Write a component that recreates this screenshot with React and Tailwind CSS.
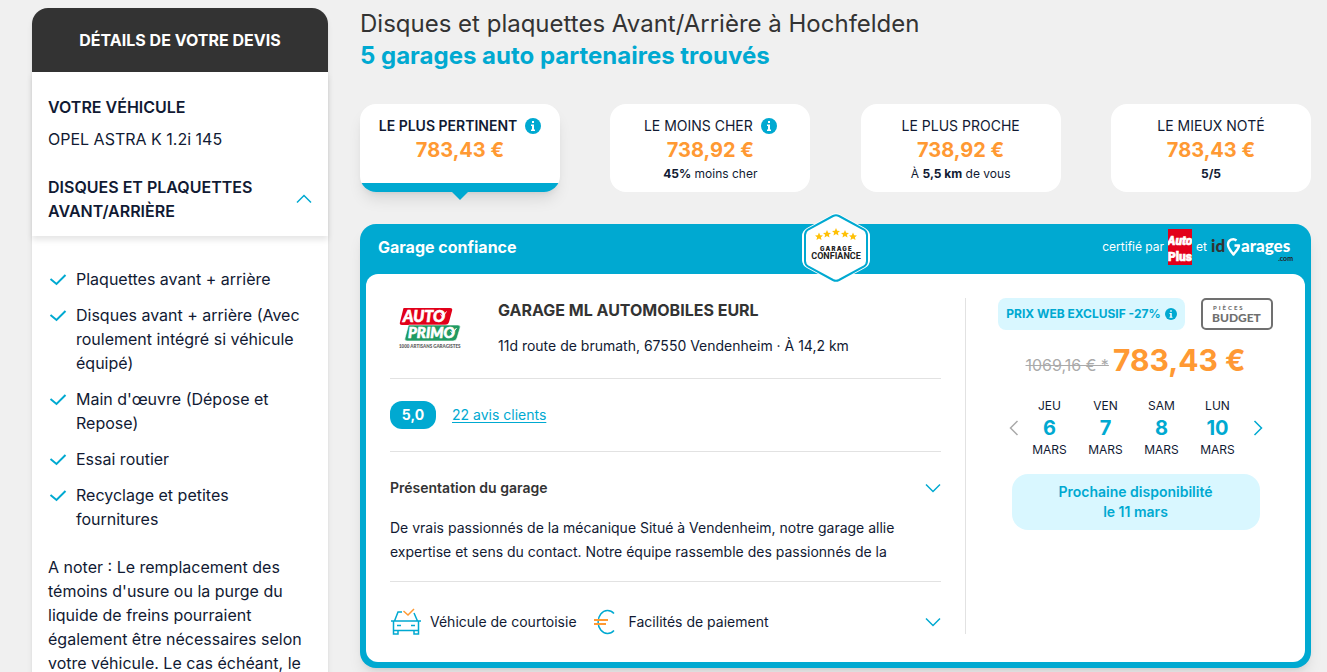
import React, { useState } from 'react';

const services = [
  'Plaquettes avant + arrière',
  'Disques avant + arrière (Avec roulement intégré si véhicule équipé)',
  "Main d'œuvre (Dépose et Repose)",
  'Essai routier',
  'Recyclage et petites fournitures',
];

const sorts = [
  { id: 'pertinent', label: 'LE PLUS PERTINENT', price: '783,43 €', info: true, note: null },
  { id: 'cher', label: 'LE MOINS CHER', price: '738,92 €', info: true, note: <><b>45%</b> moins cher</> },
  { id: 'proche', label: 'LE PLUS PROCHE', price: '738,92 €', info: false, note: <>À <b>5,5 km</b> de vous</> },
  { id: 'note', label: 'LE MIEUX NOTÉ', price: '783,43 €', info: false, note: <b>5/5</b> },
];

const days = [
  { day: 'JEU', num: 6, month: 'MARS' },
  { day: 'VEN', num: 7, month: 'MARS' },
  { day: 'SAM', num: 8, month: 'MARS' },
  { day: 'LUN', num: 10, month: 'MARS' },
];

const App = () => {
  const [sort, setSort] = useState('pertinent');

  return (
    <div className="flex h-screen items-start gap-8 overflow-hidden bg-[#f0f0f0] pt-2 pr-4 pl-8 font-['Inter',sans-serif] text-[#111a33]">
      <Sidebar />

      <main className="min-w-0 flex-1">
        <h1 className="text-2xl leading-8 text-[#333333]">Disques et plaquettes Avant/Arrière à Hochfelden</h1>
        <h2 className="text-2xl leading-8 font-bold text-[#00a9d1]">5 garages auto partenaires trouvés</h2>

        {/* Onglets de tri */}
        <div className="mt-8 flex justify-between gap-4">
          {sorts.map(item => (
            <SortCard key={item.id} item={item} active={item.id === sort} onClick={() => setSort(item.id)} />
          ))}
        </div>

        <GarageCard />
      </main>
    </div>
  );
};

const Sidebar = () => (
  <aside className="w-[296px] shrink-0 rounded-t-2xl bg-white shadow-md">
    <div className="flex h-16 items-center justify-center rounded-t-2xl bg-[#333333] text-base font-bold text-white">
      DÉTAILS DE VOTRE DEVIS
    </div>
    <div className="px-4 pt-[23px] pb-[13px] shadow-[0_4px_6px_rgba(0,0,0,0.1)]">
      <h3 className="font-semibold">VOTRE VÉHICULE</h3>
      <p className="mt-2">OPEL ASTRA K 1.2i 145</p>
      <button type="button" className="mt-6 flex w-full items-center justify-between text-left font-semibold">
        <span className="w-56">DISQUES ET PLAQUETTES AVANT/ARRIÈRE</span>
        <Chevron className="h-4 w-4 rotate-180 text-[#00a9d1]" />
      </button>
    </div>
    <div className="px-4 pt-[31px] pb-6">
      <ul className="space-y-3">
        {services.map(s => (
          <li key={s} className="flex gap-2">
            <svg viewBox="0 0 20 24" className="h-6 w-5 shrink-0 text-[#00a9d1]" fill="none" stroke="currentColor" strokeWidth="2">
              <path d="M2.500 12 8.500 17 17.500 8" />
            </svg>
            <span className="w-56">{s}</span>
          </li>
        ))}
      </ul>
      <p className="mt-6">
        A noter : Le remplacement des témoins d'usure ou la purge du liquide de freins pourraient également être
        nécessaires selon votre véhicule. Le cas échéant, le
      </p>
    </div>
  </aside>
);

const SortCard = ({ item, active, onClick }) => (
  <button
    type="button"
    onClick={onClick}
    className={`relative h-[88px] w-[200px] rounded-2xl bg-white pt-[10px] text-center ${active ? 'shadow-lg' : ''}`}
  >
    {active && (
      <>
        <span className="absolute inset-0 overflow-hidden rounded-2xl">
          <span className="absolute inset-x-0 bottom-0 h-[9px] bg-[#00a9d1]" />
        </span>
        <svg viewBox="0 0 16 8" className="absolute top-full left-1/2 h-2 w-4 -translate-x-1/2 text-[#00a9d1]">
          <path d="M0 0h16L8 8z" fill="currentColor" />
        </svg>
      </>
    )}
    <span className="flex h-full flex-col">
      <span className={`flex items-center justify-center gap-2 text-sm leading-6 ${active ? 'font-semibold' : ''}`}>
        {item.label}
        {item.info && <InfoIcon className="h-4 w-4" />}
      </span>
      <span className="text-xl leading-6 font-bold text-[#ff9933]">{item.price}</span>
      <span className="text-xs leading-6">{item.note}</span>
    </span>
  </button>
);

const GarageCard = () => (
  <section className="mt-8 rounded-2xl bg-[#00a9d1] px-[6px] pb-[6px] shadow-lg">
    <header className="relative flex h-[50px] items-center justify-between px-3 pb-1 text-white">
      <span className="font-bold">Garage confiance</span>
      <ConfianceBadge />
      <span className="flex items-center gap-1 text-xs">
        certifié par
        <AutoPlusLogo />
        et
        <IdGaragesLogo />
      </span>
    </header>

    <div className="flex rounded-xl bg-white pt-6 pb-7">
      <div className="min-w-0 flex-1 px-6">
        <div className="flex border-b border-[#e2e2e2] pb-5">
          <AutoPrimoLogo />
          <div className="ml-9">
            <h3 className="font-bold text-[#333333]">GARAGE ML AUTOMOBILES EURL</h3>
            <p className="mt-3 text-sm leading-6">11d route de brumath, 67550 Vendenheim · À 14,2 km</p>
          </div>
        </div>

        <div className="flex h-[73px] items-center gap-4 border-b border-[#e2e2e2]">
          <span className="flex h-7 w-[46px] items-center justify-center rounded-xl bg-[#00a9d1] text-sm font-bold text-white">5,0</span>
          <a href="#avis" className="text-sm text-[#00a9d1] underline underline-offset-2">22 avis clients</a>
        </div>

        <div className="border-b border-[#e2e2e2] pt-6 pb-[17px]">
          <button type="button" className="flex w-full items-center justify-between text-sm leading-6 font-semibold text-[#333333]">
            Présentation du garage
            <Chevron className="h-4 w-4 text-[#00a9d1]" />
          </button>
          <p className="mt-4 text-sm leading-6">
            De vrais passionnés de la mécanique Situé à Vendenheim, notre garage allie
            <br />
            expertise et sens du contact. Notre équipe rassemble des passionnés de la
          </p>
        </div>

        <button type="button" className="mt-7 flex h-6 w-full items-center text-sm">
          <CarIcon />
          <span className="ml-2">Véhicule de courtoisie</span>
          <EuroIcon />
          <span className="ml-3">Facilités de paiement</span>
          <Chevron className="ml-auto h-4 w-4 text-[#00a9d1]" />
        </button>
      </div>

      <div className="flex w-[340px] shrink-0 flex-col items-center border-l border-[#e2e2e2]">
        <div className="flex gap-4">
          <span className="flex h-8 items-center gap-1 rounded-lg bg-[#d9f7ff] px-2 text-xs font-bold text-[#00a9d1]">
            PRIX WEB EXCLUSIF -27%
            <InfoIcon className="h-3 w-3" />
          </span>
          <BudgetLogo />
        </div>

        <p className="mt-2 flex items-baseline gap-1 leading-[44px]">
          <s className="text-base text-[#aaaaaa]">1069,16 € *</s>
          <strong className="text-3xl leading-[44px] font-bold text-[#ff9933]">783,43 €</strong>
        </p>

        <div className="mt-[13px] flex items-center">
          <button type="button" aria-label="Jours précédents" className="text-[#aaaaaa]">
            <Chevron className="h-4 w-4 rotate-90" />
          </button>
          <div className="flex">
            {days.map(d => (
              <button key={d.num} type="button" className="flex w-14 flex-col items-center text-xs">
                <span className="leading-[22px]">{d.day}</span>
                <span className="text-xl leading-[22px] font-bold text-[#00a9d1]">{d.num}</span>
                <span className="leading-[22px]">{d.month}</span>
              </button>
            ))}
          </div>
          <button type="button" aria-label="Jours suivants" className="ml-1 text-[#00a9d1]">
            <Chevron className="h-4 w-4 -rotate-90" />
          </button>
        </div>

        <button type="button" className="mt-[13px] h-14 w-[248px] rounded-2xl bg-[#d9f7ff] text-sm leading-5 font-semibold text-[#00a9d1]">
          Prochaine disponibilité
          <br />
          le 11 mars
        </button>
      </div>
    </div>
  </section>
);

const Chevron = ({ className }) => (
  <svg viewBox="0 0 16 16" className={className} fill="none" stroke="currentColor" strokeWidth="1.5">
    <path d="M1 4.500 8 11.500 15 4.500" />
  </svg>
);

const InfoIcon = ({ className }) => (
  <svg viewBox="0 0 16 16" className={className}>
    <circle cx="8" cy="8" r="8" fill="#00a9d1" />
    <path d="M7 3h2v2H7zM6 6.500h3v5h1V13H6v-1.500h1V8H6z" fill="#fff" />
  </svg>
);

// Badge hexagonal posé à cheval sur l'en-tête
const ConfianceBadge = () => (
  <svg viewBox="0 0 68 70" className="absolute top-[-11px] left-1/2 h-[70px] w-[68px] -translate-x-1/2">
    <path d="M30 1.500Q34-1 38 1.500L63 15Q68 18 68 23V47Q68 52 63 55L38 68.500Q34 71 30 68.500L5 55Q0 52 0 47V23Q0 18 5 15Z" fill="#fff" />
    <path d="M31 3Q34 1.500 37 3L62 16.500Q65 18.500 65 22V48Q65 51.500 62 53.500L37 67Q34 68.500 31 67L6 53.500Q3 51.500 3 48V22Q3 18.500 6 16.500Z" fill="#fff" stroke="#00a9d1" strokeWidth="2" />
    {[[17, 23.5], [25, 21], [34, 19], [43, 21], [51, 23.5]].map(([x, y]) => (
      <path key={x} transform={`translate(${x} ${y})`} d="M0-4 1.200-1.300 4-1.100 1.900.8 2.500 3.600 0 2.100-2.500 3.600-1.900.8-4-1.100-1.200-1.300Z" fill="#ffc107" />
    ))}
    <text x="34.500" y="38" textAnchor="middle" fontFamily="Inter" fontSize="6" fontWeight="900" letterSpacing="1.200" fill="#222">GARAGE</text>
    <text x="34" y="46" textAnchor="middle" fontFamily="Roboto" fontSize="9" fontWeight="700" fill="#222">CONFIANCE</text>
  </svg>
);

const AutoPlusLogo = () => (
  <svg viewBox="0 0 24 36" className="h-9 w-6">
    <path d="M0 0h24v36H0z" fill="#e2001a" />
    <g fill="#fff" stroke="#fff" strokeWidth=".6" fontFamily="Liberation Sans Narrow, Roboto" fontWeight="900" textAnchor="middle">
      <text x="12" y="16" fontSize="12" fontStyle="italic">Auto</text>
      <text x="12" y="32" fontSize="12">Plus</text>
    </g>
  </svg>
);

// Le G est une épingle de carte
const IdGaragesLogo = () => (
  <svg viewBox="0 0 82 30" className="h-[30px] w-[82px]">
    <text x="0" y="20" fontFamily="Lato" fontSize="17" fontWeight="900" fill="#333">id</text>
    <path
      d="M25.500 8.500C22.500 6 17 7.500 17 12.500C17 16.500 20 19 22.500 22.500C25 19 28 16.500 28 13.500H23.500"
      fill="none"
      stroke="#fff"
      strokeWidth="2.400"
      strokeLinejoin="round"
    />
    <text x="30" y="20" fontFamily="Lato" fontSize="17" fontWeight="900" fill="#fff">arages</text>
    <text x="82" y="29" textAnchor="end" fontFamily="Lato" fontSize="7" fontWeight="700" fill="#222">.com</text>
  </svg>
);

const AutoPrimoLogo = () => (
  <svg viewBox="0 0 72 60" className="h-[60px] w-[72px] shrink-0">
    <path d="M14 10h46q3 0 2 3l-3 11q-1 3-4 3H12q-3 0-2-3l3-12q0-2 1-2Z" fill="#e2001a" />
    <path d="M19 27h49q3 0 2 3l-3 10q-1 3-4 3H17q-3 0-2-3l3-11q0-2 1-2Z" fill="#1f9a62" stroke="#fff" strokeWidth=".6" />
    <g fill="#fff" stroke="#fff" strokeWidth=".6" fontFamily="Lato" fontStyle="italic" fontWeight="900">
      <text x="13" y="24" fontSize="16">AUTO</text>
      <text x="18" y="40" fontSize="15">PRIMO</text>
    </g>
    <path d="M50.500 16.500l2 2.500 4-5.500M60.500 33l2 2.500 4-5.500" fill="none" stroke="#fff" strokeWidth="1" />
    <text x="9" y="50" fontFamily="Lato" fontSize="4.500" fontWeight="800" fill="#666">1000 ARTISANS GARAGISTES</text>
  </svg>
);

const BudgetLogo = () => (
  <svg viewBox="0 0 72 32" className="h-8 w-[72px]">
    <rect x="1" y="1" width="70" height="30" rx="4" fill="#fff" stroke="#707070" strokeWidth="2" />
    <text x="12" y="12" fontFamily="Lato" fontSize="6" fontWeight="900" letterSpacing="2" fill="#707070">PIÈCES</text>
    <text x="11" y="24" fontFamily="Lato" fontSize="12" fontWeight="900" fill="#707070">BUDGET</text>
  </svg>
);

const CarIcon = () => (
  <svg viewBox="0 0 32 28" className="h-7 w-8" fill="none" stroke="#00a9d1" strokeWidth="1.500">
    <path d="M12 4H8L4.500 13M24 5l3.500 8M1 13h3M28 13h3M3.500 13h25v9.500h-25zM3.500 22.500V26H8v-3.500M24 22.500V26h4.500v-3.500M7 17.500h4M21 17.500h4" />
    <path d="M13.500 3l4.500 4 6-6" stroke="#ff9933" />
  </svg>
);

const EuroIcon = () => (
  <svg viewBox="0 0 24 26" className="ml-4 h-[26px] w-6" fill="none" stroke="#00a9d1" strokeWidth="1.500">
    <path d="M21 4.500A9.500 11.500 0 1 0 21 21.500" />
    <path d="M1 11h14M1 15h12" stroke="#ff9933" strokeWidth="2" />
  </svg>
);

export default App;
